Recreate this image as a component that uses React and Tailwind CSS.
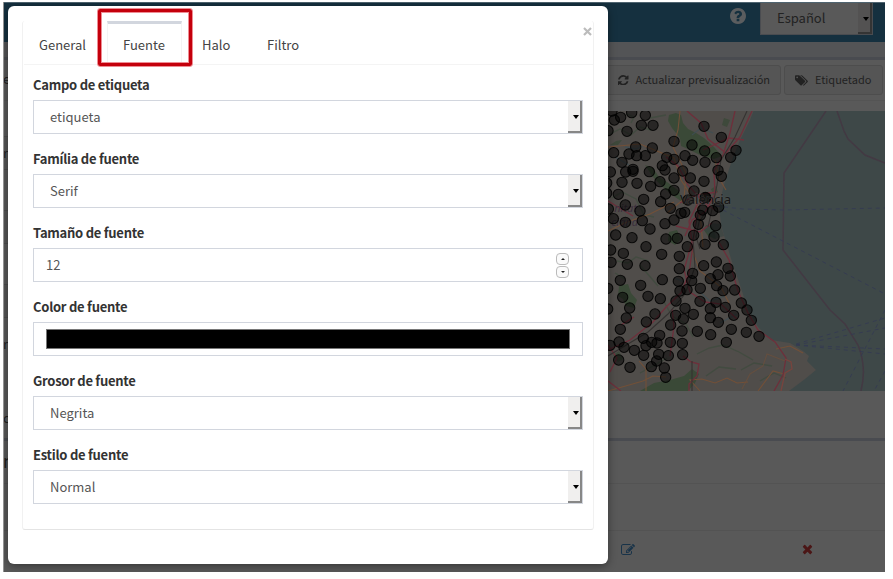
import React from "react";

const ICONS = {
  refresh:
    "M1511 1056q0 5-1 7-64 268-268 434.5t-478 166.5q-146 0-282.5-55t-243.5-157l-129 129q-19 19-45 19t-45-19-19-45v-448q0-26 19-45t45-19h448q26 0 45 19t19 45-19 45l-137 137q71 66 161 102t187 36q134 0 250-65t186-179q11-17 53-117 8-23 30-23h192q13 0 22.5 9.5t9.5 22.5zm25-800v448q0 26-19 45t-45 19h-448q-26 0-45-19t-19-45 19-45l138-138q-148-137-349-137-134 0-250 65t-186 179q-11 17-53 117-8 23-30 23h-199q-13 0-22.5-9.5t-9.5-22.5v-7q65-268 270-434.5t480-166.5q146 0 284 55.5t245 156.5l130-129q19-19 45-19t45 19 19 45z",
  edit: "M888 1184l116-116-152-152-116 116v56h96v96h56zm440-720q-16-16-33 1l-350 350q-17 17-1 33t33-1l350-350q17-17 1-33zm80 594v190q0 119-84.5 203.5t-203.5 84.5h-832q-119 0-203.5-84.5t-84.5-203.5v-832q0-119 84.5-203.5t203.5-84.5h832q63 0 117 25 15 7 18 23 3 17-9 29l-49 49q-14 14-32 8-23-6-45-6h-832q-66 0-113 47t-47 113v832q0 66 47 113t113 47h832q66 0 113-47t47-113v-126q0-13 9-22l64-64q15-15 35-7t20 29zm-96-738l288 288-672 672h-288v-288zm444 132l-92 92-288-288 92-92q28-28 68-28t68 28l152 152q28 28 28 68t-28 68z",
  times:
    "M1490 1322q0 40-28 68l-136 136q-28 28-68 28t-68-28l-294-294-294 294q-28 28-68 28t-68-28l-136-136q-28-28-28-68t28-68l294-294-294-294q-28-28-28-68t28-68l136-136q28-28 68-28t68 28l294 294 294-294q28-28 68-28t68 28l136 136q28 28 28 68t-28 68l-294 294 294 294q28 28 28 68z",
  tags: "M448 448q0-53-37.5-90.5t-90.5-37.5-90.5 37.5-37.5 90.5 37.5 90.5 90.5 37.5 90.5-37.5 37.5-90.5zm1067 576q0 53-37 90l-491 492q-39 37-91 37-53 0-90-37l-715-716q-38-37-64.5-101t-26.5-117v-416q0-52 38-90t90-38h416q53 0 117 26.5t102 64.5l715 714q37 39 37 91zm384 0q0 53-37 90l-491 492q-39 37-91 37-36 0-59-14t-53-45l470-470q37-37 37-90 0-52-37-91l-715-714q-38-38-102-64.5t-117-26.5h224q53 0 117 26.5t102 64.5l715 714q37 39 37 91z",
  help: "M1024 1376v-192q0-14-9-23t-23-9h-192q-14 0-23 9t-9 23v192q0 14 9 23t23 9h192q14 0 23-9t9-23zm256-672q0-88-55.5-163t-138.5-116-170-41q-243 0-371 213-15 24 8 42l132 100q7 6 19 6 16 0 25-12 53-68 86-92 34-24 86-24 48 0 85.5 26t37.5 59q0 38-20 61t-68 45q-63 28-115.5 86.5t-52.5 125.5v36q0 14 9 23t23 9h192q14 0 23-9t9-23q0-19 21.5-49.5t54.5-49.5q32-18 49-28.5t46-35 44.5-48 28-60.5 12.5-81zm384 192q0 209-103 385.5t-279.5 279.5-385.5 103-385.5-103-279.5-279.5-103-385.5 103-385.5 279.5-279.5 385.5-103 385.5 103 279.5 279.5 103 385.5z",
};

function Icon({ name, box, className }) {
  return (
    <svg viewBox={box} className={className} fill="currentColor">
      <path d={ICONS[name]} />
    </svg>
  );
}

// Sampling sites, in thirds of a pixel; each group has its own origin.
const NORTH = [
  [43,45],[62,37],[95,23],[136,31],[36,18],[24,77],[81,79],[124,61],[159,61],[312,64],[364,97],[222,109],[276,120],[41,143],[107,126],[157,129],[314,138],[408,136],[392,157],[87,147],[110,152],[136,152],[200,157],[222,163],[255,152],[278,166],[315,172],[349,158],[66,172],[187,182],[195,195],[77,201],[99,193],[99,199],[31,201],[148,200],[248,198],[354,196],[364,214],[222,219],[271,219],[312,229],[20,234],[66,232],[111,235],[180,230],[152,244],[20,265],[55,268],[222,256],[197,267],[282,258],[131,283],[182,290],[264,285],[316,277],[317,278],[76,300],[25,312],[120,318],[211,310],[243,325],[254,322],[308,315],[338,317],[356,306],[301,331],[40,341],[76,352],[127,347],[222,345],[195,356],[295,358],[347,362],[150,372],[47,390],[96,398],[198,402],[232,400],[281,391],[342,395],[138,425],[32,435],[262,425],[315,418],[370,419],
];
const SOUTH = [
  [70,25],[185,28],[238,34],[33,52],[82,58],[135,62],[238,71],[311,62],[349,51],[384,70],[278,85],[354,89],[391,93],[61,106],[187,104],[235,109],[275,107],[331,101],[122,121],[350,122],[23,130],[240,138],[261,134],[301,130],[369,137],[404,135],[68,157],[144,154],[181,161],[228,168],[300,169],[348,172],[89,189],[23,192],[255,190],[331,191],[376,187],[424,174],[441,195],[79,219],[165,207],[227,211],[250,222],[280,208],[331,218],[401,211],[454,226],[139,231],[355,232],[212,240],[61,253],[246,258],[292,259],[394,253],[332,269],[439,262],[477,274],[130,280],[179,271],[30,301],[57,291],[72,307],[138,302],[155,292],[171,294],[211,292],[247,295],[379,292],[103,316],[131,331],[176,328],[205,332],[248,329],[56,345],[170,348],[90,367],[154,365],[193,369],[197,397],
];

function Site({ x, y }) {
  return <circle cx={x} cy={y} r="15.5" fill="#000" fillOpacity=".5" stroke="#000" strokeOpacity=".85" strokeWidth="3.2" />;
}

function MapPreview() {
  return (
    <svg viewBox="608 111 277 280" className="block h-[280px] w-[277px] shrink-0">
      <rect x="608" y="111" width="277" height="280" fill="#3e4848" />
      <path d="M600 100H758L750 120L740 140L732 160L724 185L719 205L721 225L726 242L733 265L741 288L748 310L758 327L771 340L790 343L803 351L809 356L807 361L816 370L805 379L789 391H600Z" fill="#504d4a" />
      <g fill="#3a4937">
        <path d="M669 115l7-2 5 2 2 8 5 6 8 4 8 5 10 9 8 9-8 3-14-4-12-6-7-3-1-8-8-10-4-7z" />
        <path d="M619 286l9-2 3 9 6 7-3 8-8-2-3-7-5-3zM645 165l8 3 6 9 8 5 12 9 5 12-9-6-10-8-12-12z" />
        <path d="M640 391l14-8 16-3 14-4 8-7 7 5-4 9-7 8zM669 232l8-2 4 9-6 6-7-4zM706 225l7 2 3 12-8-3-4-6z" />
        <path d="M610 145l6-4 6-1-4 5zM613 355l6-4 4 8-5 3zM711 189l5-3 2 6-5 3zM724 118l6 2-3 7-5-2z" opacity=".8" />
      </g>
      <path d="M703 229l7-6 10 1 4 12-10 3z" fill="#394542" opacity=".7" />
      <g fill="none" stroke="#3f4b3e" strokeWidth="1.3" opacity=".8">
        <path d="M608 135l12-6 11 6 9-8 11 3M627 114l7 3-3 6M650 118l16-3M612 198l10-6 14 7 8 16 10 2M617 261l11 2 8-6 13 4M615 273l10 6M640 265l18 21M663 300l9 16 14 8 7 13M640 373l13-7 14-8M697 354l12-6 14-3 16 7 14 8M706 376l13-9 17 2M741 370l13-7 18 3M760 381l14-8 12 5" />
        <path d="M625 147l11 2 8-4M615 157l14 8M692 135l9-7 12 5M675 278l9 4M700 292l10 9 15-5M720 323l17-9" stroke="#3f4e54" />
      </g>
      <g fill="none" stroke="#725038" strokeWidth="1.1">
        <path d="M608 147l32-3 12 5 22 9 7 22 15 23 5 20 2 24M680 111l-2 19-5 17 13 26-2 26-17 14M646 391v-22l-7-8M715 160l4 18 7 12M608 231l19-9 23-8 24-12M690 245l10 26 21 16 8 16M608 391l35-10 10-5 13 1M700 391l-10-11 12-1 13 4 12-5 10 5 11-1M758 391l15-20 11 3M776 349l14-3 13 7" />
        <path d="M742 389l8-15 13-8 4-12 18 7" opacity=".6" />
      </g>
      <g fill="none" stroke="#6e2f3b" strokeWidth="1.3">
        <path d="M687 111l14 12 7 16 18 14 14-16 12-26M735 111l-5 22-7 22-9 16 1 23-10 18-13 8-7 16M666 157l12 9 10 19 15 17 12 8M608 350l22-10 23-18 14-16 14-13 8-20 4-28 3-29 7-20M670 356l4-30-2-17M608 345l9 13-7 14M683 356l8 6 8 2-2 12-8 8v7" />
        <path d="M698 203l-9 18 3 21-8 28 6 22 15 10 16 2 16 15M719 242l10 18 9 31 10 22 10 17 17 12 11 16-3 17-9 16M676 226l24 6 12-9M703 150l26-12 15 2M621 325l13-8M608 381l13 10M608 201l25 15M680 203l17-8 20-3" />
        <path d="M785 359l6 3 1 7-7 4-4 18" stroke="#78443e" />
      </g>
      <g fill="none" stroke="#353231" strokeWidth="1.1">
        <path d="M747 111l-12 26-14 23-4 25-5 24-4 18M692 391v-30M608 356l40-24 20-18 17-20 10-27-2-28 7-35" />
        <path d="M709 208l-10 14-3 15 4 12" />
      </g>
      <g fill="none" stroke="#433943" strokeWidth="1.5">
        <path d="M826 111L784 173L783 250L830 310L845 324L858 345Q867 367 861 391" />
        <path d="M837 111L844 131L848 139L865 155L885 163" />
      </g>
      <g fill="none" stroke="#343a52" strokeWidth="1" strokeDasharray="4 4" opacity=".85">
        <path d="M716 206L743 209L783 210L885 208M723 210L885 294M796 344L885 318M796 345L885 328M796 345L885 349M796 345L885 354M885 310L843 391M885 371L874 391" />
      </g>
      <g fill="#3b2e3c" textAnchor="end" fontFamily='"Noto Sans", sans-serif' fontSize="11" fontStyle="italic">
        <text x="637" y="212">nitat</text>
        <text x="638" y="226">ciana</text>
      </g>
      <g transform="translate(600 105) scale(.333333)">
        {NORTH.map(([x, y], i) => <Site key={i} x={x} y={y} />)}
      </g>
      <g transform="translate(600 245) scale(.333333)">
        {SOUTH.map(([x, y], i) => <Site key={i} x={x} y={y} />)}
      </g>
      <text x="680" y="204" fill="#151515" stroke="#575654" strokeOpacity=".35" strokeWidth="1.5" paintOrder="stroke" fontFamily='"Noto Sans", sans-serif' fontSize="13.2">
        València
      </text>
    </svg>
  );
}

function Arrow({ dim }) {
  return (
    <span
      className={
        "flex w-[14px] items-center justify-center border-r-2 border-b-2 pt-[2px] pl-[3px] " +
        (dim ? "border-[#343434] bg-[#535252]" : "border-[#878787] bg-[#f0efee]")
      }
    >
      <span className="h-0 w-0 border-x-[3.5px] border-t-4 border-x-transparent border-t-black" />
    </span>
  );
}

function Field({ label, children }) {
  return (
    <div className="h-[74px]">
      <div className="h-5 text-[13px] leading-5 font-bold tracking-[-0.26px] text-[#333]">{label}</div>
      <div className="mt-[5px] flex h-[34px] w-[550px] border border-[#d2d6de]">{children}</div>
    </div>
  );
}

function Select({ value }) {
  return (
    <>
      <span className="flex-1 pl-4 text-[13px] leading-8 text-[#555]">{value}</span>
      <Arrow />
    </>
  );
}

function Spin({ up }) {
  return (
    <span className="flex h-[12px] w-[13px] items-center justify-center rounded-[4px] border border-[#bbb] bg-[#fafafa]">
      <span
        className={
          "h-0 w-0 border-x-2 border-x-transparent " +
          (up ? "border-b-2 border-b-[#222]" : "border-t-2 border-t-[#222]")
        }
      />
    </span>
  );
}

function Tab({ children, className }) {
  return <div className={"h-[43px] pt-[14px] text-[13px] leading-5 text-[#444] " + className}>{children}</div>;
}

function Background() {
  return (
    <div className="flex h-full flex-col bg-[#595959]">
      <header className="flex h-10 shrink-0 border-t border-[#4f6470] bg-[#15303f]">
        <Icon name="help" box="128 128 1536 1536" className="mt-[5px] ml-[727px] h-4 w-4 text-[#5b5d5f]" />
        <div className="ml-[14px] flex h-8 w-[113px] border-x border-b border-[#4a4c50] bg-[#595959]">
          <span className="flex-1 pl-4 text-[13px] leading-[30px] text-[#222]">Español</span>
          <Arrow dim />
        </div>
      </header>
      <div className="h-[15px] shrink-0 bg-[#535456]" />
      <div className="h-[3px] shrink-0 bg-[#494b50]" />
      <div className="flex h-[41px] shrink-0 justify-between border-b border-[#545454] pt-[5px] pr-[2px]">
        <span className="pt-1 text-[13px] leading-5 text-[#202020]">e</span>
        <div className="flex gap-[3px]">
          <div className="flex h-[30px] w-[176px] items-center rounded-[3px] border border-[#4d4d4d] bg-[#555] pl-[12px] text-[11px] text-[#222]">
            <Icon name="refresh" box="0 128 1536 1536" className="h-[10.5px] w-[10.5px]" />
            <span className="mb-[2px] ml-[7px] tracking-[-0.07px] whitespace-nowrap">Actualizar previsualización</span>
          </div>
          <div className="flex h-[30px] w-[99px] items-center rounded-[3px] border border-[#4d4d4d] bg-[#555] pl-[10px] text-[11px] text-[#222]">
            <Icon name="tags" box="0 128 1920 1536" className="h-[11px] w-[13px]" />
            <span className="mb-[2px] ml-[7px]">Etiquetado</span>
          </div>
        </div>
      </div>
      <div className="flex h-[337px] shrink-0 pt-[10px]">
        <div className="w-[605px] text-[13px] leading-5 text-[#202020]">
          <div className="h-[25px]" />
          <div className="h-[34px] border-y border-[#4c4c4c] bg-[#555] pt-[6px]">r</div>
          <div className="mt-10 h-[34px] border-y border-[#4c4c4c] bg-[#555]" />
          <div className="mt-10 h-[34px] border-y border-[#4c4c4c] bg-[#555]" />
          <div className="mt-4 h-5">r</div>
          <div className="mt-[54px] h-5">c</div>
        </div>
        <MapPreview />
      </div>
      <div className="h-[3px] shrink-0 bg-[#494b50]" />
      <div className="h-[43px] shrink-0 border-b border-[#535353] text-[17px] leading-[40px] text-[#202020]">n</div>
      <div className="h-[47px] shrink-0 border-b border-[#535353]" />
      <div className="flex pt-[12px]">
        <Icon name="edit" box="0 0 1792 1792" className="ml-[618px] h-[14px] w-[14px] text-[#183349]" />
        <Icon name="times" box="192 128 1536 1536" className="ml-[167px] h-[12px] w-[12px] text-[#4b1616]" />
      </div>
    </div>
  );
}

export default function App() {
  return (
    <div className='h-[579px] w-[893px] overflow-hidden bg-white pt-[2px] pl-[3px] font-["Noto_Sans_CJK_SC","Noto_Sans",sans-serif]'>
      <div className="relative h-[570px] w-[882px] overflow-hidden border-l border-[#929292]">
        <div className="-ml-px h-full w-[882px]">
          <Background />
        </div>
        <div className="absolute top-[4px] left-[4px] h-[558px] w-[600px] rounded-md bg-white pt-[15px] pl-[14px] shadow-[0_2px_8px_rgba(0,0,0,0.4)]">
          <div className="h-[509px] w-[572px] rounded-[3px] border-x border-b border-[#f1f1f1] border-b-[#e4e4e4] pl-px">
            <div className="flex h-[44px] border-b border-[#f4f4f4]">
              <Tab className="ml-[15px] w-[68px]">General</Tab>
              <div className="h-[44px] w-[75px] border-x border-t-[3px] border-[#f4f4f4] border-t-[#d2d6de] bg-white pt-[11px] pl-[15px] text-[13px] leading-5 text-[#444]">
                Fuente
              </div>
              <Tab className="ml-5 w-[65px]">Halo</Tab>
              <Tab className="flex-1">Filtro</Tab>
              <div className="flex h-[22px] w-[10px] items-center pb-px">
                <svg viewBox="0 0 9 9" className="h-[9px] w-[9px]">
                  <path d="M1 1l7 7M8 1L1 8" stroke="#bcbcbc" strokeWidth="2.2" />
                </svg>
              </div>
            </div>
            <div className="px-[9px] pt-[10px]">
              <Field label="Campo de etiqueta"><Select value="etiqueta" /></Field>
              <Field label="Família de fuente"><Select value="Serif" /></Field>
              <Field label="Tamaño de fuente">
                <span className="flex-1 pl-3 text-[13px] leading-8 text-[#555]">12</span>
                <span className="mr-[13px] flex flex-col justify-center gap-[1px]">
                  <Spin up />
                  <Spin />
                </span>
              </Field>
              <Field label="Color de fuente">
                <span className="mx-3 my-[6px] flex-1 border border-[#777] bg-black" />
              </Field>
              <Field label="Grosor de fuente"><Select value="Negrita" /></Field>
              <Field label="Estilo de fuente"><Select value="Normal" /></Field>
            </div>
          </div>
        </div>
        <div className="absolute top-[6px] left-[93px] h-[59px] w-[96px] rounded-[3px] border border-[#ee8d94]">
          <div className="h-full w-full rounded-[2px] border-[3px] border-[#c4000c]">
            <div className="h-full w-full border border-[#ee8d94]" />
          </div>
        </div>
      </div>
    </div>
  );
}
